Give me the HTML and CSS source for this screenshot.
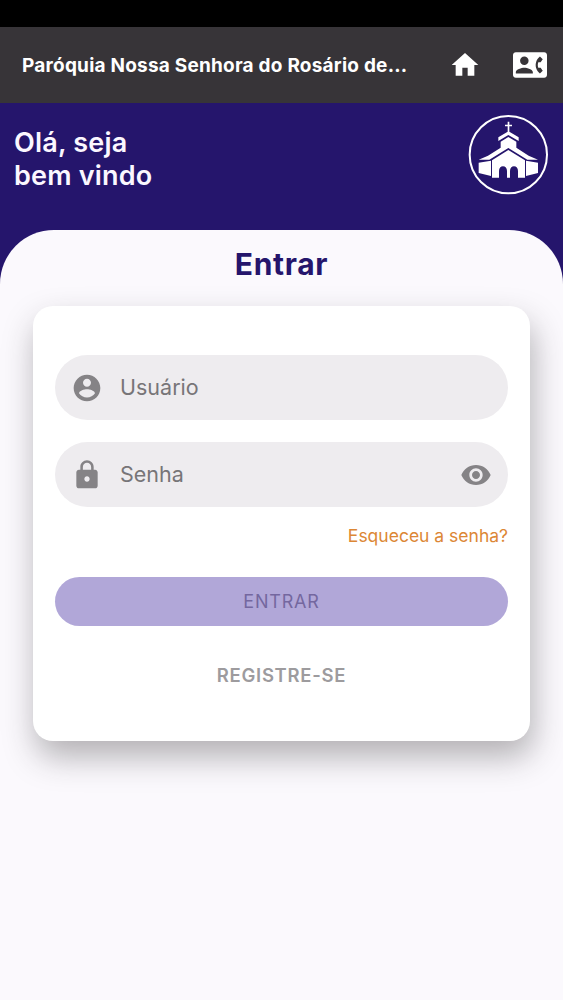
FILE: index.html
```
<!DOCTYPE html>
<html lang="pt-BR">

<head>
  <meta charset="UTF-8">
  <meta name="viewport" content="width=device-width, initial-scale=1.0">
  <title>Paróquia Nossa Senhora do Rosário - Entrar</title>
  <link rel="stylesheet" href="styles.css">
</head>

<body>

  <header class="barra">
    <h1 class="titulo">Paróquia Nossa Senhora do Rosário de...</h1>
    <svg class="icone-casa" viewBox="0 0 24 24"><path d="M10 20v-6h4v6h5v-8h3L12 3 2 12h3v8z"/></svg>
    <svg class="icone-contato" viewBox="0 0 24 24"><path d="M22 3H2C.9 3 0 3.900 0 5v14c0 1.100.9 2 2 2h20c1.100 0 1.990-.9 1.990-2L24 5c0-1.100-.9-2-2-2zM8 6c1.660 0 3 1.340 3 3s-1.340 3-3 3-3-1.340-3-3 1.340-3 3-3zm6 12H2v-1c0-2 4-3.100 6-3.100s6 1.100 6 3.100v1zm3.850-4h1.640L21 16l-1.990 1.990c-1.310-.98-2.280-2.380-2.730-3.990-.18-.64-.28-1.310-.28-2s.1-1.360.28-2c.45-1.620 1.420-3.010 2.730-3.990L21 8l-1.510 2h-1.640c-.22.63-.35 1.300-.35 2s.13 1.370.35 2z"/></svg>
  </header>

  <section class="saudacao">
    <p class="boas-vindas">Olá, seja<br>bem vindo</p>
    <!-- Igreja -->
    <svg class="logo" viewBox="30 28 243 243">
      <circle cx="151" cy="150" r="116" fill="none" stroke="#fff" stroke-width="6"/>
      <path d="M149 51h5v9h8v5h-8v16l28 17v11l-31-18-30 18V98l28-17V65h-8v-5h8z"/>
      <path d="M151 97l24 14v18l37 24 28 12h-32l-57-35-57 35H62l28-12 38-24v-18z"/>
      <path d="M151 136l50 31v52h-21v-20c0-9-5-14-12-14s-12 5-12 14v20h-9v-20c0-9-5-14-12-14s-12 5-12 14v20h-21v-52z"/>
      <path d="M62 174l37-6v46l-37-9zM240 174l-36-6v46l36-9z"/>
    </svg>
  </section>

  <main class="folha">
    <h2 class="subtitulo">Entrar</h2>

    <form class="cartao">
      <label class="campo">
        <svg viewBox="0 0 24 24"><path d="M12 2C6.480 2 2 6.480 2 12s4.480 10 10 10 10-4.480 10-10S17.520 2 12 2zm0 3c1.660 0 3 1.340 3 3s-1.340 3-3 3-3-1.340-3-3 1.340-3 3-3zm0 14.200c-2.500 0-4.710-1.280-6-3.220.030-1.990 4-3.080 6-3.080 1.990 0 5.970 1.090 6 3.080-1.290 1.940-3.500 3.220-6 3.220z"/></svg>
        <input type="text" placeholder="Usuário">
      </label>
      <label class="campo campo-senha">
        <svg viewBox="0 0 24 24"><path d="M18 8h-1V6c0-2.760-2.240-5-5-5S7 3.240 7 6v2H6c-1.100 0-2 .9-2 2v10c0 1.100.9 2 2 2h12c1.100 0 2-.9 2-2V10c0-1.100-.9-2-2-2zm-6 9c-1.100 0-2-.9-2-2s.9-2 2-2 2 .9 2 2-.9 2-2 2zm3.100-9H8.900V6c0-1.710 1.390-3.100 3.100-3.100s3.100 1.390 3.100 3.100v2z"/></svg>
        <input type="password" placeholder="Senha">
        <svg viewBox="0 0 24 24"><path d="M12 4.500C7 4.500 2.730 7.610 1 12c1.730 4.390 6 7.500 11 7.500s9.270-3.110 11-7.500c-1.730-4.390-6-7.500-11-7.500zM12 17c-2.760 0-5-2.240-5-5s2.240-5 5-5 5 2.240 5 5-2.240 5-5 5zm0-8c-1.660 0-3 1.340-3 3s1.340 3 3 3 3-1.340 3-3-1.340-3-3-3z"/></svg>
      </label>
      <a class="esqueceu">Esqueceu a senha?</a>
      <button class="botao-entrar" type="button">ENTRAR</button>
      <a class="registre">REGISTRE-SE</a>
    </form>
  </main>

</body>

</html>
```

FILE: styles.css
```
* {
  box-sizing: border-box;
}

body {
  margin: 0;
  padding-top: 27px;
  min-height: 1000px;
  display: flex;
  flex-direction: column;
  background: #000;
  font-family: Inter, "Liberation Sans", sans-serif;
}

svg {
  display: block;
  flex: none;
}

.barra {
  display: flex;
  align-items: center;
  height: 76px;
  padding: 0 16px 0 22px;
  background: #373438;
  fill: #fff;
}

.titulo {
  flex: 1;
  margin: 0;
  font-size: 19px;
  font-weight: 650;
  letter-spacing: 0.22px;
  white-space: nowrap;
  color: #fff;
}

.icone-casa {
  width: 32px;
  height: 32px;
  margin-right: 32px;
}

.icone-contato {
  width: 34px;
  height: 34px;
}

.saudacao {
  display: flex;
  justify-content: space-between;
  height: 180px;
  padding: 11px 14px 0;
  background: #25156c;
}

.boas-vindas {
  margin: 12px 0 0;
  font-size: 27px;
  line-height: 33px;
  font-weight: 600;
  letter-spacing: 0.2px;
  color: #fbf7ff;
}

.logo {
  width: 81px;
  height: 81px;
  fill: #fff;
}

.folha {
  flex: 1;
  margin-top: -53px;
  border-radius: 54px 54px 0 0;
  background: #fbf9fd;
}

.subtitulo {
  margin: 0;
  padding-top: 17px;
  height: 76px;
  font-size: 30px;
  line-height: 35px;
  font-weight: 650;
  letter-spacing: 0.7px;
  text-align: center;
  color: #25156c;
}

.cartao {
  display: flex;
  flex-direction: column;
  height: 435px;
  margin: 0 33px;
  padding: 49px 22px 0;
  border-radius: 20px;
  background: #fff;
  box-shadow: 3px 16px 32px rgba(40, 37, 42, 0.34);
}

.campo {
  display: flex;
  align-items: center;
  height: 65px;
  padding: 0 16px;
  border-radius: 33px;
  background: #eeecef;
  fill: #858386;
}

.campo svg {
  width: 32px;
  height: 32px;
}

.campo-senha {
  margin-top: 22px;
}

.campo input {
  flex: 1;
  min-width: 0;
  margin-left: 17px;
  padding: 0 0 1px;
  border: none;
  outline: none;
  background: none;
  font-family: inherit;
  font-size: 21.5px;
}

.campo input::placeholder {
  color: #777578;
}

.esqueceu {
  align-self: flex-end;
  margin-top: 18px;
  font-size: 17.5px;
  line-height: 22px;
  color: #dc8735;
}

.botao-entrar {
  height: 49px;
  margin-top: 30px;
  border: none;
  border-radius: 25px;
  background: #b1a7d8;
  font-family: inherit;
  font-size: 18px;
  letter-spacing: 0.8px;
  color: #74679f;
}

.registre {
  align-self: center;
  margin-top: 38px;
  font-size: 18.5px;
  line-height: 22px;
  font-weight: 600;
  letter-spacing: 0.7px;
  color: #9d9b9e;
}
```
